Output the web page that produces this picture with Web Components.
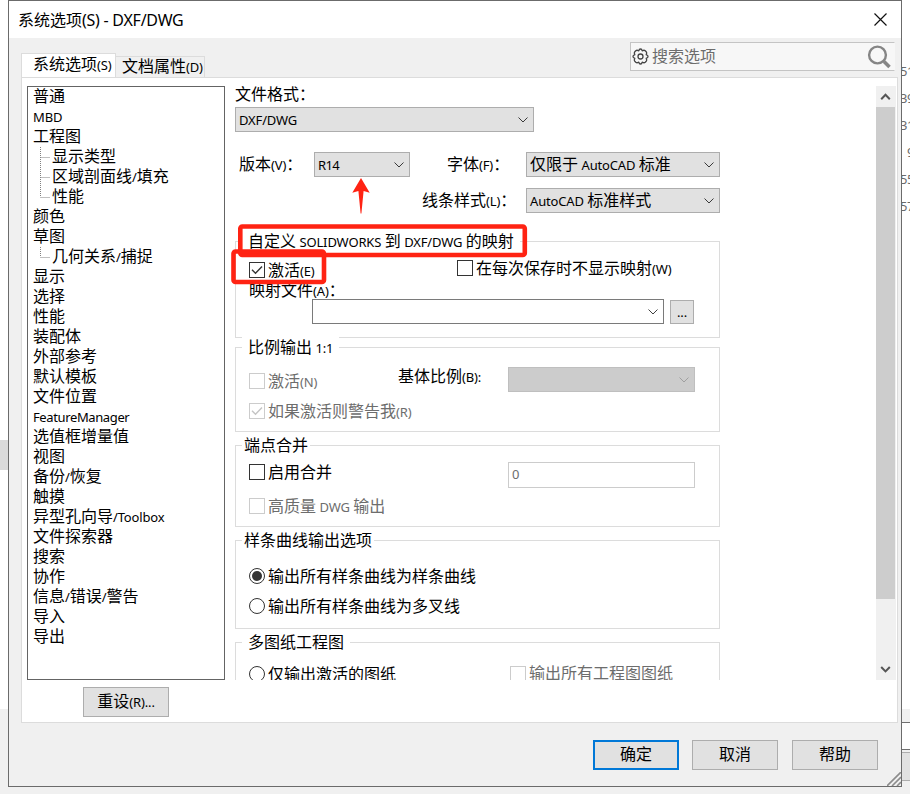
<!DOCTYPE html>
<html lang="zh-CN">
<head>
<meta charset="utf-8">
<title>系统选项(S) - DXF/DWG</title>
<style>
html,body{margin:0;padding:0}
body{width:910px;height:794px;overflow:hidden;background:#fff;color:#000;font:16px/20px "Liberation Sans","Noto Sans CJK SC",sans-serif}
</style>
</head>
<body>
<options-app></options-app>
<script>
const define=(name,css,html,init)=>{
  const t=document.createElement('template');
  t.innerHTML=`<style>*{box-sizing:border-box}:host{box-sizing:border-box}${css}</style>${html}`;
  customElements.define(name,class extends HTMLElement{
    connectedCallback(){
      if(this.shadowRoot)return;
      this.attachShadow({mode:'open'}).append(t.content.cloneNode(true));
      if(init)init(this,this.shadowRoot);
    }
  });
};

// Text line: Chinese runs at 16px, Latin runs in a smaller face.
define('mixed-text',
 `:host{display:block;white-space:pre;height:20px;line-height:20px;word-spacing:-1px}
  .l{font:var(--latin,13px)/1 "Noto Sans",sans-serif;letter-spacing:var(--track,-.15px);word-spacing:0}`,
 `<span id="t"></span>`,
 (el,r)=>{
  const box=r.getElementById('t');
  for(const run of el.getAttribute('text').match(/[\x21-\x7e][\x20-\x7e]*[\x21-\x7e]|[\x21-\x7e]| |[^\x20-\x7e]+/g)){
    const s=document.createElement('span');
    s.textContent=run;
    if(/^[\x21-\x7e]/.test(run))s.className='l';
    box.append(s);
  }
 });

define('drop-down',
 `:host{display:flex;align-items:center;justify-content:space-between;height:25px;padding:0 5px 0 3px;border:1px solid #adadad;background:#e1e1e1;flex:none}
  :host([plain]){background:#fff;border-color:#7a7a7a}
  :host([off]){background:#ccc;border-color:#bfbfbf;color:#909090}
  svg{display:block;flex:none}`,
 `<slot></slot><svg width="10" height="6" viewBox="0 0 10 6" fill="none" stroke="currentColor" stroke-opacity=".75"><path d="M.5.5 5 5 9.5.5"/></svg>`,
 (el,r)=>{if(!el.children.length)r.querySelector('slot').innerHTML='<span></span>';});

define('check-box',
 `:host{display:flex;align-items:center;gap:3px;height:20px;flex:none}
  :host([off]){color:#6d6d6d}
  i{width:16px;height:16px;border:1px solid #333;background:#fff;flex:none;display:block}
  :host([off]) i{border-color:#ccc}
  svg{display:none;width:14px;height:14px;stroke:#333}
  :host([off]) svg{stroke:#c4c4c4}
  :host([checked]) svg{display:block}`,
 `<i><svg viewBox="0 0 14 14" fill="none" stroke-width="1.4"><path d="M2 6.8 5.5 10.3 12 3.6"/></svg></i><slot></slot>`);

define('radio-button',
 `:host{display:flex;align-items:center;gap:3px;height:20px;flex:none}
  i{width:16px;height:16px;border:1px solid #333;border-radius:50%;padding:2px;flex:none}
  :host([checked]) i{background:#333 content-box}`,
 `<i></i><slot></slot>`);

define('group-box',
 `:host{display:block;width:485px;border:1px solid #dcdcdc;flex:none}
  header{width:max-content;margin:-11px 0 0 6px;background:#fff;padding:0 6px;height:20px}
  :host([tight]) header{padding:0 2px}
  ::slotted(.row){display:flex;align-items:flex-start}`,
 `<header><slot name="legend"></slot></header><slot></slot>`);

define('push-button',
 `:host{display:flex;align-items:center;justify-content:center;width:86px;height:30px;border:1px solid #adadad;background:#e1e1e1;flex:none}
  :host([primary]){border:2px solid #0078d7}`,
 `<slot></slot>`);

define('tree-row',
 `:host{display:flex;height:20px;padding-left:5px}
  .b{display:none;width:20px;height:20px;flex:none;margin-left:-1px}
  :host([child]) .b{display:block}
  #c{display:none}
  :host([child=mid]) #c{display:inline}`,
 `<svg class="b" viewBox="0 0 20 20" stroke="#808080" stroke-dasharray="1 1"><path d="M8.5 0V10M8.5 10.5H18"/><path id="c" d="M8.5 10V20"/></svg><slot></slot>`);

define('option-list',
 `:host{display:block;width:198px;height:594px;border:1px solid #646464;background:#fff}`,
 ``,
 (el,r)=>{
  const rows=['普通','MBD','工程图','+显示类型','+区域剖面线/填充','-性能','颜色','草图','-几何关系/捕捉','显示','选择','性能','装配体','外部参考','默认模板','文件位置','FeatureManager','选值框增量值','视图','备份/恢复','触摸','异型孔向导/Toolbox','文件探索器','搜索','协作','信息/错误/警告','导入','导出'];
  r.innerHTML+=rows.map(s=>{
    const k=s[0]=='+'?'mid':s[0]=='-'?'end':'';
    return `<tree-row ${k?`child="${k}"`:''}><mixed-text text="${k?s.slice(1):s}" ${s=='FeatureManager'?'style="--track:-.38px"':''}></mixed-text></tree-row>`;
  }).join('');
 });

define('search-box',
 `:host{display:flex;align-items:center;width:265px;height:29px;border:1px solid #c4c4c4;border-right-color:#f7f7f7;background:#f7f7f7;color:#6d6d6d;padding:0 3px 0 1px}
  mixed-text{flex:1;margin:0 0 0 3px}svg{flex:none}`,
 `<svg width="17" height="17" viewBox="0 0 17 17" fill="none" stroke="#444" stroke-width="1.3" stroke-linejoin="round"><path d="M6.9 2.6 Q7.1 1 8.5 1 Q9.9 1 10.1 2.6 L10.6 2.8 Q12 1.7 13.2 2.8 L14.2 3.8 Q15.3 5 14.2 6.4 L14.4 6.9 Q16 7.1 16 8.5 Q16 9.9 14.4 10.1 L14.2 10.6 Q15.3 12 14.2 13.2 L13.2 14.2 Q12 15.3 10.6 14.2 L10.1 14.4 Q9.9 16 8.5 16 Q7.1 16 6.9 14.4 L6.4 14.2 Q5 15.3 3.8 14.2 L2.8 13.2 Q1.7 12 2.8 10.6 L2.6 10.1 Q1 9.9 1 8.5 Q1 7.1 2.6 6.9 L2.8 6.4 Q1.7 5 2.8 3.8 L3.8 2.8 Q5 1.7 6.4 2.8Z"/><circle cx="8.5" cy="8.5" r="2.5"/></svg>
  <mixed-text text="搜索选项"></mixed-text>
  <svg width="24" height="24" viewBox="0 0 24 24" fill="none" stroke="#858585"><circle cx="10.5" cy="10" r="8.4" stroke-width="2.4"/><path d="M17 16.5 22.5 22" stroke-width="3.6"/></svg>`);

define('scroll-bar',
 `:host{display:flex;flex-direction:column;justify-content:space-between;width:20px;height:594px;background:#f0f0f0;flex:none}
  svg{display:block;flex:none}b{display:block;width:19px;height:492px;background:#cdcdcd}u{flex:1}`,
 `<svg width="20" height="21" fill="none" stroke="#555" stroke-width="2"><path d="M5.2 13.2 9.5 8.8 13.8 13.2"/></svg><b></b><u></u><svg width="20" height="21" fill="none" stroke="#555" stroke-width="2"><path d="M5.2 8 9.5 12.4 13.8 8"/></svg>`);

define('export-page',
 `:host{display:flex;flex-direction:column;width:651px;height:594px;overflow:hidden;padding-left:10px}
  .row{display:flex;align-items:flex-start}
  mixed-text{padding-top:1px}
  drop-down mixed-text,push-button mixed-text{padding-top:0}`,
 `<mixed-text text="文件格式：" style="margin-top:-2px"></mixed-text>
  <drop-down style="width:299px;margin-top:3px"><mixed-text text="DXF/DWG"></mixed-text></drop-down>
  <div class="row" style="margin-top:20px">
   <mixed-text text="版本(V)：" style="width:75px;margin:2px 0 0 4px"></mixed-text>
   <drop-down style="width:96px"><mixed-text text="R14" style="--track:-.6px"></mixed-text></drop-down>
   <mixed-text text="字体(F)：" style="width:79px;margin:2px 0 0 37px"></mixed-text>
   <drop-down style="width:194px"><mixed-text text="仅限于 AutoCAD 标准"></mixed-text></drop-down>
  </div>
  <div class="row" style="margin-top:11px">
   <mixed-text text="线条样式(L)：" style="width:104px;margin:2px 0 0 187px"></mixed-text>
   <drop-down style="width:194px"><mixed-text text="AutoCAD 标准样式"></mixed-text></drop-down>
  </div>
  <group-box style="height:97px;margin-top:28px">
   <mixed-text slot="legend" text="自定义 SOLIDWORKS 到 DXF/DWG 的映射"></mixed-text>
   <div class="row" style="height:30px;padding:7px 0 0 13px">
    <check-box checked style="width:208px;margin-top:2px"><mixed-text text="激活(E)"></mixed-text></check-box>
    <check-box><mixed-text text="在每次保存时不显示映射(W)"></mixed-text></check-box>
   </div>
   <mixed-text text="映射文件(A)：" style="height:18px;padding-left:13px;margin-top:-1px;margin-bottom:1px"></mixed-text>
   <div class="row" style="padding-left:76px;gap:6px">
    <drop-down plain style="width:352px"></drop-down>
    <push-button style="width:24px;height:24px;margin-top:1px"><mixed-text text="..."></mixed-text></push-button>
   </div>
  </group-box>
  <group-box style="height:85px;margin-top:9px">
   <mixed-text slot="legend" text="比例输出 1:1"></mixed-text>
   <div class="row" style="height:44px;padding:9px 0 0 13px">
    <check-box off style="width:149px;margin-top:5px"><mixed-text text="激活(N)"></mixed-text></check-box>
    <mixed-text text="基体比例(B):" style="width:110px;margin-top:0"></mixed-text>
    <drop-down off style="width:187px;margin-top:1px"></drop-down>
   </div>
   <check-box off checked style="margin-left:13px"><mixed-text text="如果激活则警告我(R)"></mixed-text></check-box>
  </group-box>
  <group-box tight style="height:82px;margin-top:13px">
   <mixed-text slot="legend" text="端点合并"></mixed-text>
   <div class="row" style="height:41px;padding:7px 0 0 13px">
    <check-box style="width:259px"><mixed-text text="启用合并"></mixed-text></check-box>
    <value-field></value-field>
   </div>
   <check-box off style="margin-left:13px"><mixed-text text="高质量 DWG 输出"></mixed-text></check-box>
  </group-box>
  <group-box tight style="height:89px;margin-top:13px">
   <mixed-text slot="legend" text="样条曲线输出选项"></mixed-text>
   <radio-button checked style="margin:16px 0 10px 13px"><mixed-text text="输出所有样条曲线为样条曲线"></mixed-text></radio-button>
   <radio-button style="margin-left:13px"><mixed-text text="输出所有样条曲线为多叉线"></mixed-text></radio-button>
  </group-box>
  <group-box style="height:90px;margin-top:13px">
   <mixed-text slot="legend" text="多图纸工程图"></mixed-text>
   <div class="row" style="padding:12px 0 0 13px">
    <radio-button style="width:261px"><mixed-text text="仅输出激活的图纸"></mixed-text></radio-button>
    <check-box off><mixed-text text="输出所有工程图图纸" style="padding-top:0"></mixed-text></check-box>
   </div>
  </group-box>`);

define('value-field',
 `:host{display:flex;align-items:center;width:187px;height:26px;border:1px solid #ccc;padding:0 0 2px 3px;color:#6d6d6d;background:#fff}`,
 `<mixed-text text="0"></mixed-text>`);

define('tab-strip',
 `:host{display:flex;align-items:flex-end;height:25px}
  .a{width:95px;height:25px;border:1px solid #dcdcdc;border-bottom:0;background:#fff;padding:1px 0 0 11px;}
  .i{width:89px;height:22px;border:1px solid #dcdcdc;border-left:0;border-bottom:0;padding:0 0 0 6px;background:#f0f0f0}`,
 `<div class="a"><mixed-text text="系统选项(S)"></mixed-text></div><div class="i"><mixed-text text="文档属性(D)"></mixed-text></div>`);

define('note-marks',
 `:host{position:absolute;inset:0;pointer-events:none}svg{display:block}`,
 `<svg width="910" height="794" fill="none" stroke="#ff2313"><rect x="240.3" y="226.5" width="284.5" height="28.5" rx="2" stroke-width="4.6"/><rect x="233.5" y="251.5" width="90.5" height="30.5" rx="2" stroke-width="4.6"/><path d="M361 178 369.7 192.8 363.6 191 361.4 213.5H360.6L358.4 191 352.3 192.8Z" fill="#ff2313" stroke="none"/></svg>`);

define('options-dialog',
 `:host{display:flex;flex-direction:column;width:894px;height:787px;border:1px solid #6b6b6b;background:#f0f0f0;flex:none}
  .title{display:flex;justify-content:space-between;align-items:center;height:37px;background:#fff;padding:0 14px 0 9px;--latin:16px;--track:-.25px}
  .title mixed-text{padding-top:1px}
  .head{display:flex;justify-content:space-between;height:39px;padding:4px 6px 0 12px}
  tab-strip{margin-top:11px}
  .panel{width:877px;height:646px;margin-left:12px;border:1px solid #dcdcdc;background:#fff;padding:8px 0 0 5px;flex:none}
  .cols{display:flex}
  .foot{display:flex;justify-content:flex-end;gap:13px;padding:17px 23px 0 0}
  .foot push-button:last-child{margin-left:1px}
  .grip{position:absolute;left:887px;top:772px}`,
 `<div class="title"><mixed-text text="系统选项(S) - DXF/DWG"></mixed-text><svg width="13" height="13" stroke="#111" stroke-width="1.2"><path d="M.5.5l12 12M12.5.5l-12 12"/></svg></div>
  <div class="head"><tab-strip></tab-strip><search-box></search-box></div>
  <div class="panel"><div class="cols"><option-list></option-list><export-page></export-page><scroll-bar></scroll-bar></div>
   <push-button style="margin:7px 0 0 56px"><mixed-text text="重设(R)..."></mixed-text></push-button></div>
  <div class="foot"><push-button primary><mixed-text text="确定"></mixed-text></push-button><push-button><mixed-text text="取消"></mixed-text></push-button><push-button><mixed-text text="帮助"></mixed-text></push-button></div>
  <svg class="grip" width="14" height="14" stroke="#8c8c8c" stroke-width="1.6"><path d="M0 14 14 0M5 14 14 5M10 14 14 10"/></svg>`);

// Slivers of the window behind the dialog.
define('back-left',
 `:host{display:block;width:8px;height:794px;padding-top:440px;flex:none}i,b{display:block}i{height:30px;background:#dadada}b{height:85px;margin-top:239px;background:#f0f0f0}`,
 `<i></i><b></b>`);
define('back-right',
 `:host{display:flex;flex-direction:column;width:8px;height:794px;overflow:hidden;flex:none}
  .n{height:709px;padding-top:57px;color:#6a6a6a;flex:none;--latin:13px;--track:-.4px}
  mixed-text{height:27px;line-height:27px;margin-left:-2px}
  .g{height:85px;background:#f0f0f0;padding-top:13px}.f{height:28px;border:solid #6f6f6f;border-width:1px 0;background:#fff}.h{height:29px;margin-top:2px;border:solid #adadad;border-width:1px 0;background:#e1e1e1}`,
 `<div class="n"><mixed-text text="51"></mixed-text><mixed-text text="39"></mixed-text><mixed-text text="31"></mixed-text><mixed-text text="9" style="margin-left:5px"></mixed-text><mixed-text text="55"></mixed-text><mixed-text text="57"></mixed-text></div><div class="g"><div class="f"></div><div class="h"></div></div>`);

define('options-app',
 `:host{display:flex;position:relative;width:910px;height:794px;overflow:hidden;background:linear-gradient(#fff 787px,#f0f0f0 787px)}`,
 `<back-left></back-left><options-dialog></options-dialog><back-right></back-right><note-marks></note-marks>`);
</script>
</body>
</html>
